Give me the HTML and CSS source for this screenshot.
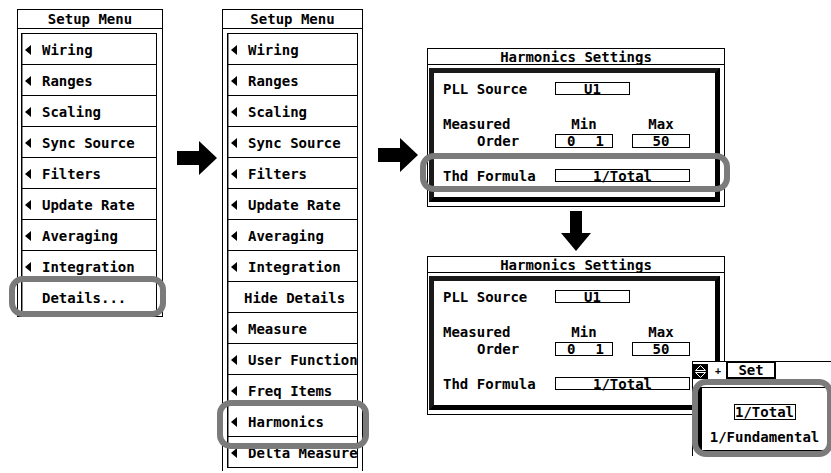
FILE: index.html
```html
<!DOCTYPE html>
<html lang="en">

<head>
  <meta charset="UTF-8" />
  <meta name="viewport" content="width=device-width, initial-scale=1.0" />
  <title>Harmonics Settings</title>
  <link rel="stylesheet" href="styles.css">
</head>

<body>
  <div class="canvas">

    <div class="menu menu-short">
      <div class="menu-title">Setup Menu</div>
      <ul class="menu-list">
        <li class="item"><span class="tri"></span>Wiring</li>
        <li class="item"><span class="tri"></span>Ranges</li>
        <li class="item"><span class="tri"></span>Scaling</li>
        <li class="item"><span class="tri"></span>Sync Source</li>
        <li class="item"><span class="tri"></span>Filters</li>
        <li class="item"><span class="tri"></span>Update Rate</li>
        <li class="item"><span class="tri"></span>Averaging</li>
        <li class="item"><span class="tri"></span>Integration</li>
        <li class="item plain ring-details">Details...</li>
      </ul>
    </div>

    <svg class="arrow arrow-first" width="40" height="34" viewBox="0 0 40 34">
      <path d="M0 10H22V0L40 17L22 34V24H0Z" />
    </svg>

    <div class="menu menu-long">
      <div class="menu-title">Setup Menu</div>
      <ul class="menu-list">
        <li class="item"><span class="tri"></span>Wiring</li>
        <li class="item"><span class="tri"></span>Ranges</li>
        <li class="item"><span class="tri"></span>Scaling</li>
        <li class="item"><span class="tri"></span>Sync Source</li>
        <li class="item"><span class="tri"></span>Filters</li>
        <li class="item"><span class="tri"></span>Update Rate</li>
        <li class="item"><span class="tri"></span>Averaging</li>
        <li class="item"><span class="tri"></span>Integration</li>
        <li class="item plain plain-wide">Hide Details</li>
        <li class="item"><span class="tri"></span>Measure</li>
        <li class="item"><span class="tri"></span>User Function</li>
        <li class="item"><span class="tri"></span>Freq Items</li>
        <li class="item ring-harmonics"><span class="tri"></span>Harmonics</li>
        <li class="item"><span class="tri"></span>Delta Measure</li>
      </ul>
    </div>

    <svg class="arrow arrow-second" width="40" height="34" viewBox="0 0 40 34">
      <path d="M0 10H22V0L40 17L22 34V24H0Z" />
    </svg>

    <div class="dialogs">
      <div class="dialog">
        <div class="dialog-title">Harmonics Settings</div>
        <div class="dialog-body">
          <div class="row">
            <span class="label">PLL Source</span>
            <span class="field field-pll">U1</span>
          </div>
          <div class="order-grid">
            <span>Measured</span>
            <span class="head">Min</span>
            <span></span>
            <span class="head">Max</span>
            <span class="indent">Order</span>
            <span class="field field-order split"><span>0</span><span>1</span></span>
            <span></span>
            <span class="field field-order">50</span>
          </div>
          <div class="row row-thd">
            <span class="label">Thd Formula</span>
            <span class="field field-thd">1/Total</span>
          </div>
        </div>
        <div class="ring ring-thd"></div>
      </div>

      <svg class="arrow-down" width="30" height="40" viewBox="0 0 30 40">
        <path d="M9 0H21V22H30L15 40L0 22H9Z" />
      </svg>

      <div class="dialog">
        <div class="dialog-title">Harmonics Settings</div>
        <div class="dialog-body">
          <div class="row">
            <span class="label">PLL Source</span>
            <span class="field field-pll">U1</span>
          </div>
          <div class="order-grid">
            <span>Measured</span>
            <span class="head">Min</span>
            <span></span>
            <span class="head">Max</span>
            <span class="indent">Order</span>
            <span class="field field-order split"><span>0</span><span>1</span></span>
            <span></span>
            <span class="field field-order">50</span>
          </div>
          <div class="row row-thd">
            <span class="label">Thd Formula</span>
            <span class="field field-thd">1/Total</span>
          </div>
        </div>

        <!-- selection popup for Thd Formula -->
        <div class="popup">
          <div class="popup-head">
            <svg class="updown" width="15" height="15" viewBox="0 0 15 15">
              <rect width="15" height="15" />
              <path d="M2.5 6.5L7.5 1.5L12.5 6.5Z M2.5 8.5H12.5L7.5 13.5Z" fill="none" stroke="#fff" />
            </svg>
            <span class="plus">+</span>
            <span class="set-btn">Set</span>
          </div>
          <div class="popup-list">
            <span class="choice selected">1/Total</span>
            <span class="choice">1/Fundamental</span>
          </div>
          <div class="ring ring-popup"></div>
        </div>
      </div>
    </div>

  </div>
</body>

</html>
```

FILE: styles.css
```css
html,
body {
  overflow: hidden;
}

body {
  margin: 0;
  width: 831px;
  height: 473px;
  background-color: #ffffff;
  color: #000;
  font-family: "DejaVu Sans Mono", "Liberation Mono", monospace;
  font-weight: bold;
  font-size: 14px;
}

.canvas {
  display: flex;
  align-items: flex-start;
  padding: 9px 0 0 17px;
}

/* Setup menus */
.menu {
  box-sizing: border-box;
  border: 1px solid #000;
  flex-shrink: 0;
}

.menu-short {
  width: 146px;
}

.menu-long {
  width: 141px;
  margin-left: 5px;
  border-bottom: none;
}

.menu-title {
  height: 18px;
  line-height: 19px;
  text-align: center;
  border-bottom: 1px solid #000;
}

.menu-list {
  list-style: none;
  margin: 0;
  padding: 4px 5px 3px 3px;
}

.menu-long .menu-list {
  padding-left: 4px;
  padding-right: 4px;
}

.item {
  position: relative;
  box-sizing: border-box;
  height: 31px;
  display: flex;
  align-items: center;
  padding: 2px 0 0 3px;
  border: 1px solid #000;
  border-bottom: none;
  box-shadow: inset 2px 0 0 -1px #8a8a8a;
  white-space: nowrap;
}

.item:last-child {
  height: 32px;
  border-bottom: 1px solid #000;
}

.tri {
  width: 0;
  height: 0;
  border-style: solid;
  border-width: 5px 6px 5px 0;
  border-color: transparent #000 transparent transparent;
  margin-right: 11px;
}

.item.plain {
  padding-left: 20px;
}

.item.plain-wide {
  padding-left: 16px;
}

/* grey highlight rings */
.ring,
.ring-details::after,
.ring-harmonics::after {
  position: absolute;
  box-sizing: border-box;
  border: 6px solid #7b7b7b;
  border-radius: 14px;
  pointer-events: none;
  z-index: 2;
}

.ring-details::after,
.ring-harmonics::after {
  content: "";
}

.ring-details::after {
  left: -13px;
  right: -10px;
  top: -6px;
  bottom: -5px;
}

.ring-harmonics::after {
  left: -11px;
  right: -12px;
  top: -6px;
  bottom: -13px;
}

/* arrows */
.arrow {
  flex-shrink: 0;
}

.arrow-first {
  margin: 132px 0 0 14px;
}

.arrow-second {
  margin: 129px 0 0 15px;
}

.arrow-down {
  display: block;
  margin: 4px 0 5px 134px;
}

/* Harmonics Settings dialogs */
.dialogs {
  width: 298px;
  flex-shrink: 0;
  margin: 39px 0 0 9px;
}

.dialog {
  position: relative;
  box-sizing: border-box;
  width: 298px;
  border: 1px solid #000;
  background-color: #fff;
}

.dialog-title {
  height: 15px;
  line-height: 16px;
  text-align: center;
  border-bottom: 1px solid #000;
}

.dialog-body {
  margin: 3px 4px 4px 1px;
  border: 5px solid #000;
  border-color: #1a1a1a #000 #000 #1a1a1a;
  padding: 9px 0 15px 9px;
}

.row {
  display: flex;
  align-items: center;
  height: 13px;
}

.label {
  width: 112px;
  flex-shrink: 0;
}

.field {
  box-sizing: border-box;
  height: 13px;
  line-height: 12px;
  border: 1px solid #000;
  text-align: center;
}

.field-pll {
  width: 75px;
}

.field-thd {
  width: 135px;
}

.order-grid {
  display: grid;
  grid-template-columns: 112px 58px 19px 58px;
  grid-template-rows: 14px 14px;
  row-gap: 3px;
  align-items: center;
  margin-top: 22px;
  line-height: 14px;
}

.order-grid .head {
  text-align: center;
}

.order-grid .indent {
  padding-left: 34px;
}

.field-order {
  height: 14px;
  line-height: 13px;
}

.field.split {
  display: flex;
  justify-content: space-between;
  padding: 0 8px 0 11px;
}

.row-thd {
  margin-top: 21px;
}

.ring-thd {
  left: -8px;
  top: 104px;
  width: 310px;
  height: 39px;
}

/* selection popup */
.popup {
  position: absolute;
  left: 264px;
  top: 104px;
  box-sizing: border-box;
  width: 145px;
  height: 95px;
  border-top: 1px solid #000;
  border-left: 1px solid #000;
  background-color: #fff;
  z-index: 3;
}

.popup-head {
  display: flex;
  align-items: center;
  height: 17px;
}

.updown {
  display: block;
  margin-top: 1px;
}

.plus {
  font-size: 10px;
  margin: 0 5px 0 7px;
}

.set-btn {
  box-sizing: border-box;
  width: 50px;
  height: 17px;
  line-height: 14px;
  border: 2px solid #000;
  border-top-width: 1px;
  text-align: center;
}

.popup-list {
  box-sizing: border-box;
  width: 130px;
  height: 64px;
  margin: 8px 0 0 5px;
  border: 1px solid #000;
  border-left: 4px solid #000;
  padding-top: 16px;
  display: flex;
  flex-direction: column;
  align-items: center;
}

.choice {
  line-height: 16px;
}

.choice.selected {
  box-sizing: border-box;
  width: 62px;
  height: 16px;
  line-height: 14px;
  border: 1px solid #000;
  text-align: center;
  margin-bottom: 9px;
}

.ring-popup {
  left: -1px;
  top: 17px;
  width: 141px;
  height: 78px;
}
```
